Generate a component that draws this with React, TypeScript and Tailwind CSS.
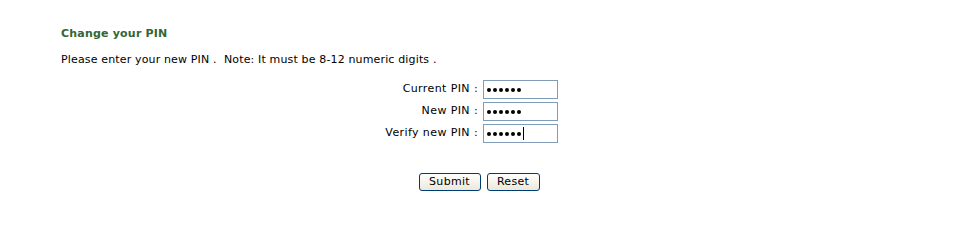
export default function App() {
  const rows = [
    { label: "Current PIN :", caret: false },
    { label: "New PIN :", caret: false },
    { label: "Verify new PIN :", caret: true },
  ];
  return (
    <div className="w-[956px] h-[210px] bg-white text-black" style={{ fontFamily: "Verdana, 'DejaVu Sans', sans-serif" }}>
      <div className="pt-[27px] pl-[61px]">
        <h1 className="text-[11px] font-bold leading-[13px] tracking-[0.2px] text-[#336633]">Change your PIN</h1>
        <p className="mt-[13px] text-[11px] leading-[13px] tracking-[0.15px] whitespace-pre">Please enter your new PIN .  Note: It must be 8-12 numeric digits .</p>
      </div>
      <div className="mt-[14px] flex flex-col gap-[3px]">
        {rows.map((r) => (
          <div key={r.label} className="grid grid-cols-2 items-center">
            <span className="text-right text-[11px] tracking-[0.4px] whitespace-pre">{r.label}</span>
            <div className="ml-[5px] h-[19px] w-[75px] border border-[#7f9db9] bg-white flex items-center gap-[2px] pl-[3px]">
              {[0, 1, 2, 3, 4, 5].map((i) => (
                <span key={i} className="w-[4px] h-[4px] rounded-full bg-black" />
              ))}
              {r.caret && <span className="w-[1px] h-[13px] bg-black" />}
            </div>
          </div>
        ))}
      </div>
      <div className="mt-[30px] flex justify-center gap-[6px] pl-[2px]">
        <button className="h-[18px] w-[62px] rounded-[3px] border border-[#003c74] bg-gradient-to-b from-white to-[#ece9d8] text-[11px] tracking-[0.3px]">
          Submit
        </button>
        <button className="h-[18px] w-[53px] rounded-[3px] border border-[#003c74] bg-gradient-to-b from-white to-[#ece9d8] text-[11px] tracking-[0.3px]">
          Reset
        </button>
      </div>
    </div>
  );
}
